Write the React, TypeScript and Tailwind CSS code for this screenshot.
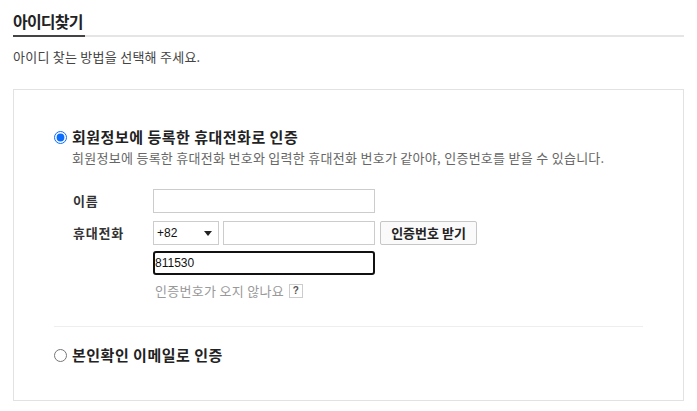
import { ChangeEvent, useState } from 'react';

const kr = "font-['Noto_Sans_CJK_KR','Noto_Sans',sans-serif]";
const latin = "font-['Liberation_Sans','Noto_Sans_CJK_KR',sans-serif]";

export default function App() {
  const [method, setMethod] = useState<'phone' | 'email'>('phone');
  const [code, setCode] = useState('811530');

  return (
    <div className={`min-h-[411px] bg-white px-[13px] text-[#333] ${kr}`}>
      {/* title */}
      <div className="flex items-end border-b-2 border-[#e5e5e5] pt-[10px]">
        <h2 className="-mb-[2px] border-b-2 border-[#444] pb-[3px] pr-[2px] text-[16px] font-bold leading-[22px] tracking-[-0.8px] text-[#222]">
          아이디찾기
        </h2>
      </div>
      <p className="mt-[11px] text-[13px] leading-[18px] tracking-[0.25px] text-[#444]">
        아이디 찾는 방법을 선택해 주세요.
      </p>

      {/* options box */}
      <div className="mt-[23px] border border-[#e2e2e2] px-[40px] pb-[35px] pt-[37px]">
        <label className="flex h-[20px] items-center">
          <input
            type="radio"
            name="method"
            checked={method === 'phone'}
            onChange={() => setMethod('phone')}
            className="h-[13px] w-[13px] accent-[#0a6cff]"
          />
          <span className="ml-[5px] text-[15px] font-bold tracking-[0.5px] text-[#222]">
            회원정보에 등록한 휴대전화로 인증
          </span>
        </label>
        <p className="ml-[18px] mt-[2px] text-[13px] leading-[18px] tracking-[0.28px] text-[#666]">
          회원정보에 등록한 휴대전화 번호와 입력한 휴대전화 번호가 같아야, 인증번호를 받을 수 있습니다.
        </p>

        <div className="mt-[22px] pl-[19px]">
          <div className="flex items-center">
            <span className="w-[80px] text-[13px] font-bold tracking-[0.8px] text-[#333]">이름</span>
            <input className="h-[24px] w-[222px] border border-[#cccccc] px-[3px] text-[12px] outline-none" />
          </div>
          <div className="mt-[8px] flex items-center">
            <span className="w-[80px] text-[13px] font-bold tracking-[0.8px] text-[#333]">휴대전화</span>
            <div className={`flex h-[24px] w-[66px] items-center justify-between border border-[#cccccc] pl-[3px] pr-[6px] text-[12px] text-[#111] ${latin}`}>
              <span>+82</span>
              <svg width="8" height="5" viewBox="0 0 8 5" aria-hidden="true">
                <path d="M0 0h8L4 5z" fill="#222" />
              </svg>
            </div>
            <input className="ml-[4px] h-[24px] w-[152px] border border-[#cccccc] px-[3px] text-[12px] outline-none" />
            <button className="ml-[5px] h-[24px] w-[97px] rounded-[2px] border border-[#c6c6c6] bg-[#fafafa] text-[13px] font-bold text-[#222]">
              인증번호 받기
            </button>
          </div>
          <div className="mt-[6px] pl-[80px]">
            <input
              value={code}
              onChange={(e: ChangeEvent<HTMLInputElement>) => setCode(e.target.value)}
              className={`block h-[24px] w-[222px] rounded-[3px] border-2 border-[#111] px-0 text-[12px] text-[#111] outline-none ${latin}`}
            />
            <div className="mt-[7px] flex items-center pl-[2px] text-[13px] leading-[18px] tracking-[0.3px] text-[#999]">
              인증번호가 오지 않나요
              <span className={`ml-[5px] flex h-[14px] w-[14px] items-center justify-center border border-[#cccccc] text-[10px] font-bold leading-none text-[#555] ${latin}`}>
                ?
              </span>
            </div>
          </div>
        </div>

        <div className="mt-[26px] border-t border-[#eeeeee]" />

        <label className="mt-[18px] flex h-[20px] items-center">
          <input
            type="radio"
            name="method"
            checked={method === 'email'}
            onChange={() => setMethod('email')}
            className="h-[13px] w-[13px] accent-[#0a6cff]"
          />
          <span className="ml-[5px] text-[15px] font-bold tracking-[0.5px] text-[#222]">
            본인확인 이메일로 인증
          </span>
        </label>
      </div>
    </div>
  );
}
